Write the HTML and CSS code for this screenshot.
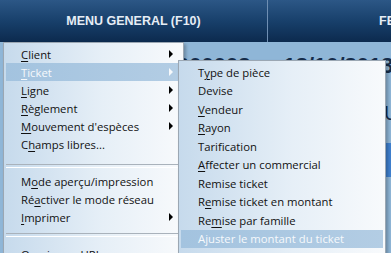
FILE: index.html
```html
<!DOCTYPE html>
<html lang="fr">
<head>
<meta charset="utf-8">
<title>Menu</title>
<link rel="stylesheet" href="styles.css">
</head>
<body>
<div class="app">
  <header class="topbar">
    <div class="tab tab-main">MENU GENERAL (F10)</div>
    <div class="tab tab-right">FERMER</div>
  </header>
  <main class="content">
    <div class="ticket-line">
      <span class="num">000002</span>
      <span class="date">18/10/2013</span>
    </div>
    <div class="side-u">U</div>
    <div class="side-strip"></div>
  </main>

  <ul class="menu main-menu">
    <li class="item"><span class="lbl"><u>C</u>lient</span><span class="arrow"></span></li>
    <li class="item active"><span class="lbl"><u>T</u>icket</span><span class="arrow"></span></li>
    <li class="item"><span class="lbl"><u>L</u>igne</span><span class="arrow"></span></li>
    <li class="item"><span class="lbl"><u>R</u>èglement</span><span class="arrow"></span></li>
    <li class="item"><span class="lbl"><u>M</u>ouvement d'espèces</span><span class="arrow"></span></li>
    <li class="item"><span class="lbl">C<u>h</u>amps libres...</span></li>
    <li class="sep sep-a"></li>
    <li class="item"><span class="lbl">M<u>o</u>de aperçu/impression</span></li>
    <li class="item"><span class="lbl">Ré<u>a</u>ctiver le mode réseau</span></li>
    <li class="item"><span class="lbl"><u>I</u>mprimer</span><span class="arrow"></span></li>
    <li class="sep sep-b"></li>
    <li class="item"><span class="lbl">Ouvrir une URL</span></li>
  </ul>

  <ul class="menu sub-menu">
    <li class="item"><span class="lbl">T<u>y</u>pe de pièce</span></li>
    <li class="item"><span class="lbl">Devise</span></li>
    <li class="item"><span class="lbl"><u>V</u>endeur</span></li>
    <li class="item"><span class="lbl"><u>R</u>ayon</span></li>
    <li class="item"><span class="lbl">Tarification</span></li>
    <li class="item"><span class="lbl"><u>A</u>ffecter un commercial</span></li>
    <li class="item"><span class="lbl">Remise ticket</span></li>
    <li class="item"><span class="lbl">R<u>e</u>mise ticket en montant</span></li>
    <li class="item"><span class="lbl">Re<u>m</u>ise par famille</span></li>
    <li class="item active"><span class="lbl">Ajuster le montant du ticket</span></li>
    <li class="item"><span class="lbl">Escompte</span></li>
  </ul>
</div>
</body>
</html>
```
FILE: styles.css
```css
* { box-sizing: border-box; }
html, body { margin: 0; padding: 0; }
body {
  width: 391px;
  height: 253px;
  overflow: hidden;
  font-family: "Open Sans", "Noto Sans", sans-serif;
  font-size: 11.3px;
  color: #111;
  background: #8fb6d7;
}
.app {
  position: relative;
  width: 391px;
  height: 253px;
  overflow: hidden;
}
.topbar {
  display: flex;
  height: 42px;
  background: linear-gradient(#2c5786, #18406b 50%, #0c2a4e);
}
.tab {
  display: flex;
  align-items: center;
  color: #e6edf5;
  font-family: "Liberation Sans", Arial, sans-serif;
  font-weight: bold;
  font-size: 12.5px;
  white-space: nowrap;
  overflow: hidden;
}
.tab-main {
  flex: 0 0 268px;
  justify-content: center;
  border-right: 1px solid #6f8fb3;
}
.tab-right {
  flex: 1 1 auto;
  min-width: 0;
  padding-left: 111px;
}
.content {
  position: relative;
  height: 211px;
  background: #8fb6d7;
}
.ticket-line {
  display: flex;
  gap: 33px;
  padding: 11px 0 0 177px;
  font-family: "Liberation Sans", Arial, sans-serif;
  font-weight: bold;
  font-size: 22px;
  color: #152c4a;
  white-space: nowrap;
  line-height: 26px;
}
.side-u {
  position: absolute;
  left: 384px;
  top: 60px;
  font-family: "Liberation Sans", Arial, sans-serif;
  font-size: 20px;
  color: #152c4a;
}
.side-strip {
  position: absolute;
  left: 384px;
  top: 101px;
  width: 10px;
  height: 34px;
  background: #3f80cf;
}
.menu {
  position: absolute;
  list-style: none;
  margin: 0;
  padding: 2px;
  background: linear-gradient(90deg, #c6daec, #e6eff7 55%, #f8fafc);
  border: 1px solid #9ba7b3;
  box-shadow: 2px 2px 3px rgba(0,0,0,0.25);
}
.main-menu {
  left: 3px;
  top: 42px;
  width: 181px;
  height: 230px;
}
.sub-menu {
  left: 178px;
  top: 60px;
  width: 208px;
  height: 220px;
}
.item {
  display: flex;
  align-items: center;
  justify-content: space-between;
  height: 18px;
  padding: 0 8px 0 15px;
  white-space: nowrap;
}
.sub-menu .item {
  height: 18.5px;
  padding-left: 17px;
}
.item u { text-decoration-thickness: 1px; text-underline-offset: 2px; }
.item.active {
  background: linear-gradient(90deg, #a3c3df, #b3cde4);
  color: #f6f9fc;
}
.arrow {
  width: 0;
  height: 0;
  border-top: 4px solid transparent;
  border-bottom: 4px solid transparent;
  border-left: 4px solid #000;
}
.item.active .arrow { border-left-color: #f6f9fc; }
.sep {
  height: 19px;
  display: flex;
  align-items: flex-start;
}
.sep-a { padding-top: 11px; }
.sep-b { padding-top: 7px; }
.sep::before {
  content: "";
  flex: 1;
  height: 2px;
  border-top: 1px solid #a9b2bb;
  border-bottom: 1px solid #ffffff;
}
```
